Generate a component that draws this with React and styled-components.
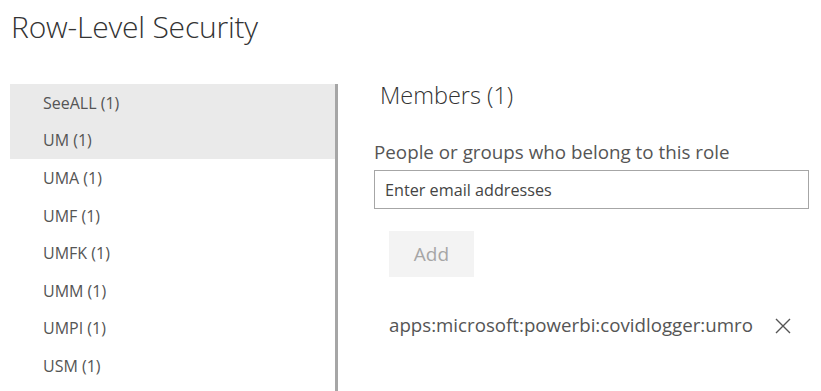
import React from "react";
import styled, { createGlobalStyle } from "styled-components";

const Global = createGlobalStyle`
  body {
    margin: 0;
    background: #fff;
    font-family: "Open Sans", "Noto Sans", sans-serif;
    color: #333;
  }
`;

const Page = styled.div`
  width: 821px;
  height: 391px;
  overflow: hidden;
  display: flex;
  flex-direction: column;
`;

const Title = styled.h1`
  margin: 0;
  padding: 6px 0 0 11px;
  height: 75px;
  box-sizing: border-box;
  font-size: 30px;
  font-weight: 300;
  color: #333;
  letter-spacing: -0.2px;
`;

const Body = styled.div`
  display: flex;
  flex: 1;
  padding-top: 9px;
`;

const RoleList = styled.ul`
  list-style: none;
  margin: 0 0 0 10px;
  padding: 0;
  width: 325px;
  border-right: 3px solid #a6a6a6;
`;

const Role = styled.li`
  height: 37.6px;
  display: flex;
  align-items: center;
  padding-left: 33px;
  font-size: 16px;
  color: #555;
  background: ${(p) => (p.selected ? "#eaeaea" : "transparent")};
`;

const Members = styled.section`
  flex: 1;
  padding-left: 36px;
  padding-right: 12px;
  display: flex;
  flex-direction: column;
`;

const MembersTitle = styled.h2`
  margin: -4px 0 0 6px;
  font-size: 23.5px;
  font-weight: 300;
  color: #333;
  line-height: 30px;
`;

const Label = styled.label`
  margin-top: 29px;
  font-size: 18.8px;
  color: #555;
  line-height: 26px;
  white-space: nowrap;
`;

const EmailInput = styled.input`
  margin-top: 5px;
  height: 39px;
  box-sizing: border-box;
  border: 1px solid #a6a6a6;
  padding: 0 10px;
  font-family: inherit;
  font-size: 16.2px;
  color: #333;
  outline: none;
  &::placeholder {
    color: #444;
  }
`;

const AddButton = styled.button`
  margin: 22px 0 0 15px;
  width: 85px;
  height: 46px;
  border: none;
  background: #f3f3f3;
  color: #a6a6a6;
  font-family: inherit;
  font-size: 19px;
  align-self: flex-start;
`;

const MemberRow = styled.div`
  margin: 35px 0 0 15px;
  display: flex;
  align-items: center;
  gap: 22px;
  font-size: 18.7px;
  color: #555;
  white-space: nowrap;
`;

const RemoveIcon = styled.svg`
  width: 16px;
  height: 16px;
  margin-top: 2px;
`;

const roles = ["SeeALL", "UM", "UMA", "UMF", "UMFK", "UMM", "UMPI", "USM"];

export default function App() {
  return (
    <Page>
      <Global />
      <Title>Row-Level Security</Title>
      <Body>
        <RoleList>
          {roles.map((r, i) => (
            <Role key={r} selected={i < 2}>
              {r} (1)
            </Role>
          ))}
        </RoleList>
        <Members>
          <MembersTitle>Members (1)</MembersTitle>
          <Label>People or groups who belong to this role</Label>
          <EmailInput placeholder="Enter email addresses" />
          <AddButton>Add</AddButton>
          <MemberRow>
            apps:microsoft:powerbi:covidlogger:umro
            <RemoveIcon viewBox="0 0 16 16">
              <path d="M1 1L15 15M15 1L1 15" stroke="#555" strokeWidth="1.4" fill="none" />
            </RemoveIcon>
          </MemberRow>
        </Members>
      </Body>
    </Page>
  );
}
